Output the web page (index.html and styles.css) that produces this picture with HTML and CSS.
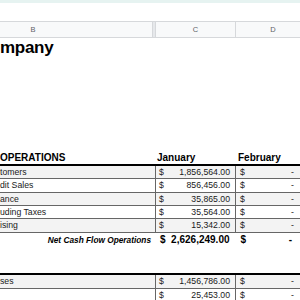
FILE: index.html
```html
<!DOCTYPE html>
<html>
<head>
<meta charset="utf-8">
<link rel="stylesheet" href="styles.css">
</head>
<body>
<div class="band"></div>
<div class="colheads">
  <div class="ch ch-b">B</div>
  <div class="ch-sep"></div>
  <div class="ch ch-c">C</div>
  <div class="ch ch-d">D</div>
</div>
<div class="title">mpany</div>
<div class="spacer1"></div>
<div class="sheet">
  <div class="row head">
    <div class="lbl">OPERATIONS</div>
    <div class="hc">January</div>
    <div class="hd">February</div>
  </div>
  <div class="row data alt">
    <div class="lbl">tomers</div>
    <div class="num c"><span>$</span><span>1,856,564.00</span></div>
    <div class="num d"><span>$</span><span>-</span></div>
  </div>
  <div class="row data">
    <div class="lbl">dit Sales</div>
    <div class="num c"><span>$</span><span>856,456.00</span></div>
    <div class="num d"><span>$</span><span>-</span></div>
  </div>
  <div class="row data alt">
    <div class="lbl">ance</div>
    <div class="num c"><span>$</span><span>35,865.00</span></div>
    <div class="num d"><span>$</span><span>-</span></div>
  </div>
  <div class="row data">
    <div class="lbl">uding Taxes</div>
    <div class="num c"><span>$</span><span>35,564.00</span></div>
    <div class="num d"><span>$</span><span>-</span></div>
  </div>
  <div class="row data alt">
    <div class="lbl">ising</div>
    <div class="num c"><span>$</span><span>15,342.00</span></div>
    <div class="num d"><span>$</span><span>-</span></div>
  </div>
  <div class="row net">
    <div class="netlbl">Net Cash Flow Operations</div>
    <div class="tot c"><span>$</span><span>2,626,249.00</span></div>
    <div class="tot d"><span>$</span><span>-</span></div>
  </div>
  <div class="spacer2"></div>
  <div class="row data alt">
    <div class="lbl">ses</div>
    <div class="num c"><span>$</span><span>1,456,786.00</span></div>
    <div class="num d"><span>$</span><span>-</span></div>
  </div>
  <div class="row data">
    <div class="lbl"></div>
    <div class="num c"><span>$</span><span>25,453.00</span></div>
    <div class="num d"><span>$</span><span>-</span></div>
  </div>
</div>
</body>
</html>
```
FILE: styles.css
```css
html, body {
  margin: 0;
  padding: 0;
}
body {
  width: 300px;
  height: 300px;
  overflow: hidden;
  background: #fff;
  font-family: "Liberation Sans", Arial, sans-serif;
  color: #000;
}
.band {
  height: 3px;
  background: #e6f3f1;
}
.colheads {
  display: flex;
  margin-top: 18px;
  height: 17px;
  box-sizing: border-box;
  border-top: 1px solid #d6d8db;
  border-bottom: 1px solid #d6d8db;
  background: #f8f9fa;
  font-size: 7.5px;
  color: #5f6368;
}
.ch {
  flex: none;
  display: flex;
  align-items: center;
  justify-content: center;
  box-sizing: border-box;
}
.ch-b {
  width: 153px;
  padding-right: 86px;
  border-right: 1px solid #d6d8db;
}
.ch-sep {
  flex: none;
  width: 2px;
  background: #e6e8eb;
}
.ch-c {
  width: 81px;
  border-left: 1px solid #d6d8db;
  border-right: 1px solid #d6d8db;
}
.ch-d {
  width: 74px;
}
.title {
  height: 20px;
  line-height: 20px;
  font-size: 17px;
  font-weight: bold;
  letter-spacing: -0.3px;
  white-space: nowrap;
}
.spacer1 {
  height: 93px;
}
.row {
  display: grid;
  grid-template-columns: 155px 80px 65px;
  box-sizing: border-box;
  white-space: nowrap;
}
.head {
  height: 15px;
  border-bottom: 2px solid #000;
  font-size: 10px;
  font-weight: bold;
  line-height: 13px;
}
.head .hc {
  padding-left: 2px;
}
.head .hd {
  padding-left: 3px;
}
.data {
  height: 13.333px;
  border-bottom: 1px solid #666;
  font-size: 8.7px;
  line-height: 12.333px;
  color: #1a1a1a;
}
.alt {
  background: #f3f3f3;
}
.lbl {
  overflow: hidden;
}
.num {
  display: flex;
  justify-content: space-between;
  border-left: 1px solid #666;
}
.num.c {
  padding: 0 5px 0 3px;
}
.num.d {
  padding: 0 6px 0 4px;
}
.net {
  height: 13.333px;
  line-height: 14px;
}
.netlbl {
  font-size: 8.3px;
  font-weight: bold;
  font-style: italic;
  text-align: right;
  padding-right: 4px;
}
.tot {
  display: flex;
  justify-content: space-between;
  font-size: 10px;
  font-weight: bold;
}
.tot.c {
  padding: 0 5.5px 0 5px;
}
.tot.d {
  padding: 0 8px 0 5.5px;
}
.spacer2 {
  height: 29.5px;
  box-sizing: border-box;
  border-bottom: 2px solid #000;
}
```
